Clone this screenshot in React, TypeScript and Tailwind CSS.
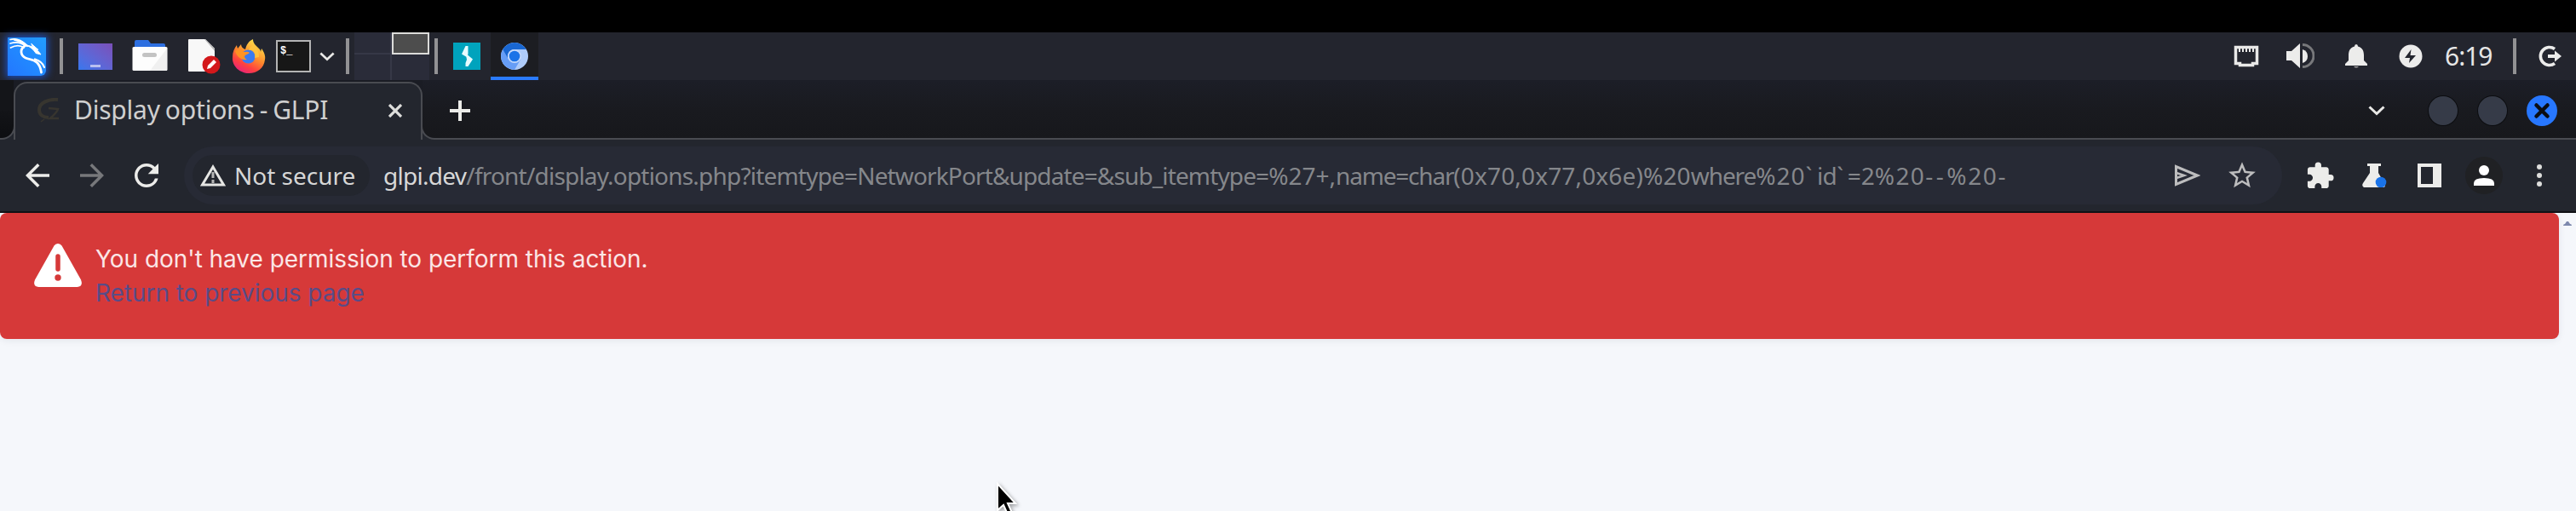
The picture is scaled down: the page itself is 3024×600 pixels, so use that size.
import React from "react";
import { MdArrowBack, MdArrowForward, MdRefresh, MdStarBorder, MdExtension } from "react-icons/md";

const Sep = ({ className = "" }: { className?: string }) => (
  <div className={`h-[42px] w-1 shrink-0 bg-[#929294] ${className}`} />
);

function Kali() {
  return (
    <div className="ml-[9px] h-[45px] w-[45px] shrink-0 rounded-br-[6px] bg-linear-to-bl from-[#229cff] to-[#2476ff] shadow-[0_0_8px_2px_#1c4fc0]">
      <svg viewBox="0 0 45 45" className="h-full w-full" fill="none" stroke="#fff" strokeLinecap="round">
        <path d="M3 2.500C9 1 16 3 22 9M3 7C9 5 16 6 21 10M3.500 12C9 9 15 9 19 12" strokeWidth="1.700" />
        <path d="M8 2.500C15 4 19 6 23 10" strokeWidth="2.400" />
        <path d="M22 9C29 10 34 13 39 20L33 18.500C31 15 28 12 22 9zM28 7.500L36 14.500L30 12z" fill="#fff" strokeWidth="1" />
        <path d="M20 10C14 14 15 21 21 24C28 27 37 25 39.500 41" strokeWidth="2.800" />
        <path d="M32 25.500C37 27 41 29 43 35" strokeWidth="2.200" />
      </svg>
    </div>
  );
}

function Folder() {
  return (
    <svg viewBox="0 0 42 38" className="ml-[23px] h-[38px] w-[42px] shrink-0">
      <path d="M3 2q0-2 2-2h14l3 4h15q2 0 2 2v12H3z" fill="#2d6fe0" />
      <rect y="8" x="0.5" width="41" height="28" rx="1.5" fill="#fdfdfd" />
      <path d="M41 10v26H21z" fill="#f0f0f0" />
      <rect x="12" y="15" width="17" height="5" rx="2.5" fill="#c3c3c3" />
    </svg>
  );
}

function Editor() {
  return (
    <svg viewBox="0 0 39 42" className="ml-[23px] h-[42px] w-[39px] shrink-0">
      <path d="M2 1h19l11 11v27H2q-1 0-1-1V2q0-1 1-1z" fill="#f8f8f8" />
      <path d="M20 1l12 14v-3L21 1z" fill="#bbb" />
      <circle cx="28" cy="31" r="10.5" fill="#d3181b" />
      <path d="M23 36l1-4 7-7 3 3-7 7z" fill="#fff" />
    </svg>
  );
}

function Firefox() {
  return (
    <svg viewBox="0 0 40 42" className="ml-[13px] h-[42px] w-10 shrink-0">
      <defs>
        <linearGradient id="fx" x1="0.8" y1="0.1" x2="0.3" y2="1">
          <stop offset="0" stopColor="#ffe04a" />
          <stop offset="0.45" stopColor="#ff8a2c" />
          <stop offset="0.75" stopColor="#ff4040" />
          <stop offset="1" stopColor="#e8247a" />
        </linearGradient>
      </defs>
      <path d="M6 8c0 2 1 3 1 4l4-5c0 3 2 5 5 6 1-5 4-10 9-12 0 5 3 7 7 11 1 1 2 2 2 4l1-4c3 4 5 9 4 13-1 10-9 16-19 16S0 33 1 22C1 16 3 12 6 8z" fill="url(#fx)" />
      <circle cx="19.500" cy="21.500" r="8" fill="#3a7bf0" />
      <path d="M4 15c3-3 8-2 10 1 2 0 5-1 7 1-2 2-5 2-6 4 0 2 1 3 3 4-6 1-12-3-14-10z" fill="#ff9322" />
      <path d="M20 14c6-1 8 4 7 9l5-1c0-8-3-11-7-14-2 1-4 3-5 6z" fill="#ffc53f" opacity=".85" />
    </svg>
  );
}

function Terminal() {
  return (
    <div className="ml-3 flex h-[38px] w-[41px] shrink-0 items-start border-2 border-[#b4b4b4] bg-[#171717] pt-[5px] pl-[3px] font-['Liberation_Mono'] text-[12px] leading-[12px] font-bold text-white">
      $_
    </div>
  );
}

function Chevron({ className }: { className: string }) {
  return (
    <svg viewBox="0 0 20 12" className={`shrink-0 ${className}`} fill="none" stroke="#e9e9e7" strokeWidth="3">
      <path d="M1.500 1.500L10 9.500l8.500-8" />
    </svg>
  );
}

function Pager() {
  return (
    <div className="ml-[6px] grid h-14 w-[88px] shrink-0 grid-cols-[44px_44px] grid-rows-[26px_30px] bg-[#2a2c39]">
      <div className="border-r-2 border-b-2 border-[#363847]" />
      <div className="border-2 border-[#dcdcda] bg-[#4d4d4d]" />
      <div className="border-r-2 border-[#363847]" />
      <div />
    </div>
  );
}

function Burp() {
  return (
    <svg viewBox="0 0 32 32" className="ml-[18px] h-8 w-8 shrink-0">
      <path d="M0 0h32v32H0z" fill="#00a3bd" />
      <path d="M14.500 4h3v9l-.5 2 .5 3-7.500-4.500zM15 15l2-.500 6 5L17.500 28h-3v-4l1.500-4z" fill="#e6fbff" />
    </svg>
  );
}

function Chromium() {
  return (
    <div className="ml-3 flex h-14 w-14 shrink-0 items-center justify-center border-b-4 border-[#2a7bff] bg-[#1c1d22] pt-1">
      <svg viewBox="0 0 32 32" className="h-8 w-8">
        <circle cx="16" cy="16" r="16" fill="#aecbfa" />
        <path d="M2.200 8A16 16 0 0 0 16 32l7-12-14 0z" fill="#669df6" />
        <path d="M2.200 8A16 16 0 0 1 29.800 8H16a8 8 0 0 0-7 12z" fill="#1967d2" />
        <circle cx="16" cy="16" r="8" fill="#c3d8fb" />
        <circle cx="16" cy="16" r="6.300" fill="#1a73e8" />
      </svg>
    </div>
  );
}

function TopPanel() {
  return (
    <div className="flex h-14 shrink-0 items-center bg-[#23252e]">
      <Kali />
      <Sep className="ml-4" />
      <div className="ml-[18px] flex h-[31px] w-10 shrink-0 items-end justify-center bg-linear-to-tr from-[#3477ee] to-[#7a4fb8] pb-[3px]">
        <div className="h-[3px] w-3 bg-[#b9bff0]" />
      </div>
      <Folder />
      <Editor />
      <Firefox />
      <Terminal />
      <Chevron className="ml-[10px] h-[11px] w-[18px]" />
      <Sep className="ml-[13px]" />
      <Pager />
      <Sep className="ml-[6px]" />
      <Burp />
      <Chromium />
      <div className="grow" />
      <svg viewBox="0 0 30 28" className="h-7 w-[30px] shrink-0" fill="none" stroke="#e9e9e8">
        <path d="M2.500 3.500h25v19h-5v2h-15v-2h-5z" strokeWidth="3.500" />
        <path d="M7 4v5M11 4v5M15 4v5M19 4v5M23 4v5" strokeWidth="2" />
      </svg>
      <svg viewBox="0 0 33 30" className="ml-8 h-[30px] w-[33px] shrink-0">
        <path d="M0 9h6L16 0v29L6 20H0z" fill="#ececeb" />
        <path d="M19 7q6 2 6 8t-6 8z" fill="#ececeb" />
        <path d="M19 1.500a13 13 0 0 1 0 26" fill="none" stroke="#77787b" strokeWidth="3" />
      </svg>
      <svg viewBox="0 0 26 28" className="ml-9 h-7 w-[26px] shrink-0" fill="#ececeb">
        <path d="M13 0q2 0 2 2.500C21 4 22 9 22 13v6l4 4v2H0v-2l4-4v-6c0-4 1-9 7-10.500Q11 0 13 0z" />
        <path d="M10 26h6q-3 3-6 0z" fill="#aaa" />
      </svg>
      <svg viewBox="0 0 28 28" className="ml-[37px] h-7 w-7 shrink-0">
        <circle cx="14" cy="14" r="13.500" fill="#ececeb" />
        <path d="M14.500 6L7 16h6l-1 6 8-9h-6.500z" fill="#23252e" />
      </svg>
      <div className="ml-[26px] w-14 shrink-0 font-['Noto_Sans',sans-serif] text-[30px] leading-[40px] tracking-[-1px] whitespace-nowrap text-[#e6e6e6]">
        6:19
      </div>
      <Sep className="ml-6" />
      <svg viewBox="0 0 28 26" className="mr-[16px] ml-[26px] h-[26px] w-7 shrink-0" fill="none" stroke="#ececeb">
        <path d="M19 4.500a10.500 10.500 0 1 0 0 17" strokeWidth="3.600" />
        <path d="M11 13h10" strokeWidth="4" />
        <path d="M19 6.500l8 6.500-8 6.500z" fill="#ececeb" stroke="none" />
      </svg>
    </div>
  );
}

function TabStrip() {
  return (
    <div className="flex h-[70px] shrink-0 bg-[#23262e]">
      <div className="relative z-10 flex w-4 shrink-0 flex-col">
        <div className="h-9 bg-[#141519]" />
        <div className="h-[34px] w-[18px] rounded-br-[16px] border-r-2 border-b-2 border-[#494b51] bg-linear-to-b from-[#131418] to-[#0d0e11]" />
      </div>
      <div className="flex w-[480px] shrink-0 flex-col bg-linear-to-b from-[#1a1c24] from-50% to-[#23262e] to-50% pt-[2px]">
        <div className="flex grow items-start rounded-t-[16px] border-2 border-b-0 border-[#494b51] bg-[#23262e]">
          <svg viewBox="0 0 28 30" className="mt-[17px] ml-[25px] h-[30px] w-7 shrink-0" fill="none" stroke="#37352f">
            <path d="M25 2C13 1 3 6 3 14c0 6 5 9 11 9" strokeWidth="4" />
            <path d="M14 12l11 1c-1 4-5 7-9 11h10" strokeWidth="2.500" />
            <path d="M9 25l-4 3" strokeWidth="1.500" />
          </svg>
          <div className="ml-[16px] w-[301px] shrink-0 pt-[11px] font-['Noto_Sans',sans-serif] text-[30px] leading-[40px] tracking-[-0.22px] whitespace-nowrap text-[#cfcfcf] [word-spacing:-1.5px]">
            Display options - GLPI
          </div>
          <svg viewBox="0 0 16 16" className="mt-[24px] ml-[68px] h-4 w-4 shrink-0" stroke="#dededc" strokeWidth="3.200">
            <path d="M1 1l14 14M15 1L1 15" />
          </svg>
        </div>
      </div>
      <div className="relative z-10 flex grow flex-col">
        <div className="flex h-9 bg-linear-to-b from-[#1c1e27] to-[#191a1f]" />
        <div className="-ml-[2px] flex h-[34px] rounded-bl-[16px] border-b-2 border-l-2 border-[#494b51] bg-linear-to-b from-[#191a1f] to-[#17181c]">
          <div className="-mt-[36px] flex h-[72px] grow items-center">
            <svg viewBox="0 0 24 24" className="ml-8 h-6 w-6 shrink-0" stroke="#ecece9" strokeWidth="4">
              <path d="M12 0v24M0 12h24" />
            </svg>
            <div className="grow" />
            <Chevron className="mr-[51px] h-3 w-5" />
            <div className="mr-6 h-[34px] w-[34px] shrink-0 rounded-full bg-[#363b48] shadow-[0_0_0_1px_#0c0d10]" />
            <div className="mr-[23px] h-[34px] w-[34px] shrink-0 rounded-full bg-[#363b48] shadow-[0_0_0_1px_#0c0d10]" />
            <svg viewBox="0 0 36 36" className="mr-[22px] h-9 w-9 shrink-0">
              <circle cx="18" cy="18" r="18" fill="#2777ff" />
              <path d="M11.500 11.500l13 13M24.500 11.500l-13 13" stroke="#0b0d12" strokeWidth="4.500" strokeLinecap="round" />
            </svg>
          </div>
        </div>
      </div>
    </div>
  );
}

function Url() {
  return (
    <div className="ml-4 grow font-['Noto_Sans',sans-serif] text-[28px] leading-[40px] whitespace-nowrap text-[#85878b]">
      <span className="tracking-[-0.72px] text-[#d8d8d8]">glpi.dev</span>
      <span className="tracking-[-0.8px]">/front/display.options.php?itemtype=</span>
      <span className="tracking-[-0.87px]">NetworkPort&amp;update=&amp;sub_itemtype=</span>
      <span>%27+,</span>
      <span className="tracking-[-1.2px]">name=char</span>
      <span className="tracking-[0.16px]">(0x70,0x77,0x6e)%20</span>
      <span className="tracking-[-1.1px]">where</span>
      <span className="tracking-[1px]">%20</span>
      <span className="tracking-[5.5px]">`</span>
      <span className="tracking-[-0.5px]">id</span>
      <span className="tracking-[4.5px]">`</span>
      <span>=2</span>
      <span className="tracking-[1.4px]">%20</span>
      <span className="tracking-[3.5px]">--</span>
      <span className="tracking-[1.6px]">%20-</span>
    </div>
  );
}

function Toolbar() {
  return (
    <div className="flex h-[86px] shrink-0 items-center border-b-2 border-[#101115] bg-[#23262e]">
      <MdArrowBack className="ml-[23px] size-[42px] shrink-0 text-[#ececea]" />
      <MdArrowForward className="ml-[22px] size-[42px] shrink-0 text-[#77787b]" />
      <MdRefresh className="ml-[22px] size-[42px] shrink-0 text-[#ececea]" />
      <div className="ml-[23px] flex h-[68px] w-[2463px] shrink-0 items-center rounded-full bg-[#272a35] pl-[10px]">
        <div className="flex h-12 w-[208px] shrink-0 items-center rounded-full bg-[#23262e] pl-[9px]">
          <svg viewBox="0 0 30 26" className="h-[26px] w-[30px] shrink-0" fill="none" stroke="#e6e6e4">
            <path d="M15 3L2.500 24h25z" strokeWidth="3" />
            <path d="M15 9v7M15 18v4" strokeWidth="3" stroke="#b5b5b5" />
          </svg>
          <div className="ml-[10px] font-['Noto_Sans',sans-serif] text-[28px] leading-[40px] whitespace-nowrap text-[#d6d6d6]">
            Not secure
          </div>
        </div>
        <Url />
        <svg viewBox="0 0 30 26" className="h-[26px] w-[30px] shrink-0" fill="none" stroke="#bdbdbe" strokeWidth="3">
          <path d="M1.500 2.500v21L26.500 13z" />
          <path d="M2 10l9 3-9 3" strokeWidth="2.500" />
        </svg>
        <MdStarBorder className="mr-[28px] ml-[30px] size-[38px] shrink-0 text-[#bdbdbe]" />
      </div>
      <MdExtension className="ml-[27px] size-[35px] shrink-0 text-[#ececea]" />
      <svg viewBox="0 0 30 28" className="ml-[32px] h-7 w-[30px] shrink-0">
        <path d="M6 0h16v3h-3v8l8 14q0 3-2 3H2q-3-2-1-5L9 11V3H6z" fill="#ececea" />
        <circle cx="22" cy="22" r="6.300" fill="#1a73e8" />
      </svg>
      <svg viewBox="0 0 28 28" className="ml-[35px] h-7 w-7 shrink-0">
        <path d="M0 0h28v28H0zM4 4v20h14V4z" fill="#ececea" fillRule="evenodd" />
      </svg>
      <div className="ml-7 flex h-11 w-11 shrink-0 items-center justify-center rounded-full bg-[#202124]">
        <svg viewBox="0 0 24 24" className="h-6 w-6" fill="#fff">
          <circle cx="12" cy="6" r="6" />
          <path d="M0 24v-3q0-6 12-6t12 6v3z" />
        </svg>
      </div>
      <svg viewBox="0 0 6 26" className="ml-10 h-[26px] w-[6px] shrink-0" fill="#dededc">
        <circle cx="3" cy="3" r="3" />
        <circle cx="3" cy="13" r="3" />
        <circle cx="3" cy="23" r="3" />
      </svg>
    </div>
  );
}

function Page() {
  return (
    <div className="relative flex grow items-start overflow-hidden bg-[#f5f7fb]">
      <div className="flex h-[148px] w-[3004px] shrink-0 items-start rounded-[8px] bg-[#d63939] pl-10 shadow-[0_2px_8px_rgba(30,41,59,0.08)]">
        <svg viewBox="0 0 56 51" className="mt-9 h-[51px] w-14 shrink-0">
          <path d="M28 0q3 0 4.500 2.500l22.500 40q3 8-4.500 8.500h-45Q-2 50.500 1 42.500l22.500-40Q25 0 28 0z" fill="#fff" />
          <path d="M28 15v15" stroke="#d63939" strokeWidth="5.500" strokeLinecap="round" />
          <circle cx="28" cy="40" r="3.700" fill="#d63939" />
        </svg>
        <div className="ml-4 pt-[34px] font-['Inter',sans-serif] text-[28px] leading-[40px] tracking-[-0.04px] whitespace-nowrap text-[#fbe6e6]">
          <div>You don't have permission to perform this action.</div>
          <div className="text-[#584c87]">Return to previous page</div>
        </div>
      </div>
      <svg viewBox="0 0 10 5" className="mt-[10px] ml-[5px] h-[5px] w-[10px] shrink-0">
        <path d="M0 5q0-2 2-2l2-3h2l2 3q2 0 2 2z" fill="#7d88ad" />
      </svg>
      <svg viewBox="0 0 28 40" className="absolute top-[315px] left-[1169px] h-10 w-7 drop-shadow-[2px_2px_2px_rgba(0,0,0,0.35)]">
        <path d="M2 3v31l7-6 5 11 5-2-5-11h9z" fill="#000" stroke="#fff" strokeWidth="2" />
      </svg>
    </div>
  );
}

export default function App() {
  return (
    <div className="flex h-[600px] w-[3024px] flex-col overflow-hidden bg-black pt-[38px]">
      <TopPanel />
      <TabStrip />
      <Toolbar />
      <Page />
    </div>
  );
}
